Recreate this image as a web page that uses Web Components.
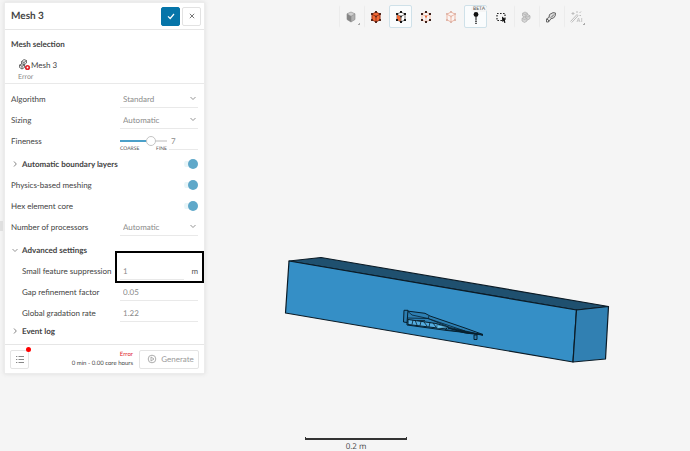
<!DOCTYPE html>
<html lang="en">
<head>
<meta charset="utf-8">
<title>Mesh 3</title>
<style>
html,body{height:100%}
body{margin:0;background:#f5f5f5;color:#444;font:8px/12px Lato,"Open Sans",sans-serif;text-rendering:geometricPrecision}
</style>
</head>
<body>
<mesh-workbench></mesh-workbench>
<script>
function define(name, html, setup) {
  const tpl = document.createElement('template');
  tpl.innerHTML = '<style>*,::before,::after{box-sizing:border-box}button,input,select{font:inherit;color:inherit;margin:0;text-rendering:inherit}</style>' + html;
  customElements.define(name, class extends HTMLElement {
    constructor() {
      super();
      this.attachShadow({mode: 'open'}).append(tpl.content.cloneNode(true));
    }
    connectedCallback() { if (setup) setup(this, this.shadowRoot); }
  });
}

const cube = (line, fill, dots, faces) => `
  <g stroke-linejoin="round" stroke="${line}" stroke-width="1">
  <path d="M8 3 12 5.200V10.800L8 13 4 10.800V5.200Z" fill="${fill}"/>${faces || ''}
  <path d="M4 5.200 8 7.500 12 5.200M8 7.500V13" fill="none"/></g>
  ${dots ? `<g fill="${dots}"><rect x="7" y="2" width="2" height="2"/><rect x="3" y="4" width="2" height="2"/><rect x="11" y="4" width="2" height="2"/><rect x="3" y="10" width="2" height="2"/><rect x="11" y="10" width="2" height="2"/><rect x="7" y="12" width="2" height="2"/><rect x="7.200" y="6.700" width="1.600" height="1.600"/></g>` : ''}`;

const ICONS = {
  solid: `<path d="M8 3 12 4.800 8 7.300 4 4.800Z" fill="#cfcfcf"/><path d="M4 4.800 8 7.300V13L4 10.500Z" fill="#858585"/><path d="M8 7.300 12 4.800V10.500L8 13Z" fill="#b0b0b0"/><path d="M8 3 12 4.800V10.500L8 13 4 10.500V4.800ZM4 4.800 8 7.300 12 4.800M8 7.300V13" fill="none" stroke="#888" stroke-width=".6"/>`,
  volume: cube('#9c3315', '#f26a36', '#54281d'),
  face: cube('#777', '#fff', '#161616', '<path d="M4 5.200 8 7.500V13L4 10.800Z" fill="#f26a36" stroke="none"/>'),
  node: `<path d="M8 3 12 5.200V10.800L8 13 4 10.800V5.200ZM4 5.200 8 7.500 12 5.200M8 7.500V13" fill="none" stroke="#f3bda9" stroke-width="1"/><g fill="#3c211b"><rect x="7" y="2" width="2" height="2"/><rect x="3" y="4" width="2" height="2"/><rect x="11" y="4" width="2" height="2"/><rect x="3" y="10" width="2" height="2"/><rect x="11" y="10" width="2" height="2"/><rect x="7" y="12" width="2" height="2"/></g><rect x="7" y="6.500" width="2" height="2" fill="#e96a3d"/>`,
  ghost: cube('#efb6a3', '#faf4f2', '#dfb8ac'),
  probe: `<circle cx="8" cy="5.500" r="2.400" fill="#111"/><path d="M8 7V11" stroke="#333" stroke-width="1.200"/><path d="M8 11.500V15" stroke="#333" stroke-width="1.600" stroke-dasharray="1.500 .7"/>`,
  select: `<rect x="4" y="4.500" width="8" height="7" fill="none" stroke="#222" stroke-width="1.200" stroke-dasharray="1.600 1.400"/><path d="M9 7.500 13 10.500 11.500 11 12.600 13.500 11.300 14 10.400 11.700 9.200 13Z" fill="#111"/>`,
  blocks: `<g fill="#d5d5d5" stroke="#b3b3b3" stroke-width=".8"><path d="M7 3 9.500 4.300V7L7 8.300 4.500 7V4.300Z"/><path d="M9.800 5.500 12 6.800V9.500L9.800 11 7.500 9.500V6.800Z"/><path d="M6.500 8 9 9.300V12L6.500 13.500 4 12V9.300Z"/><path d="M4.500 4.300 7 5.600 9.500 4.300M7.500 6.800 9.800 8 12 6.800M4 9.300 6.500 10.500 9 9.300" fill="none"/></g>`,
  cut: `<path d="M6.500 5.500Q10.500 2.500 12.500 4 13 7 10.500 9L8 9.700 6 8Z" fill="#ddd" stroke="#666" stroke-width="1"/><path d="M6.500 8 3.500 10V13H5.500L8 9.700M3.500 10 5.500 11V13" fill="#eee" stroke="#666" stroke-width="1"/><path d="M8 8.500 11 5.500" stroke="#666" stroke-width="1"/>`,
  wand: `<path d="M2.500 12.500 9 5.500M3.700 13.500 10 6.800M9 5.500 10 6.800M5 3V6M3.500 4.500H6.500M9 2V4M11.500 4 13 2.500M11.500 6.500H13" fill="none" stroke="#bdbdbd" stroke-width="1"/><path d="M9 13 10.500 9 12 13M9.600 11.800H11.500M13.700 9V13" fill="none" stroke="#c3c3c3" stroke-width=".9"/>`,
  check: `<path d="M5 8.300 7.200 10.500 11 6" fill="none" stroke="#fff" stroke-width="1.200"/>`,
  close: `<path d="M5.800 5.800 10.200 10.200M10.200 5.800 5.800 10.200" stroke="#777" stroke-width="1"/>`,
  down: `<path d="M5.500 7 8 9.500 10.500 7" fill="none" stroke="#888" stroke-width=".9"/>`,
  right: `<path d="M7 5.500 9.300 8 7 10.500" fill="none" stroke="#777" stroke-width=".9"/>`,
  list: `<path d="M6.500 5.500H12M6.500 8.500H12M6.500 11.500H12" stroke="#888" stroke-width="1"/><path d="M4 5.500H5.300M4 8.500H5.300M4 11.500H5.300" stroke="#888" stroke-width="1"/>`,
  play: `<circle cx="8" cy="8" r="3.800" fill="none" stroke="#a4a4a4" stroke-width=".9"/><path d="M7 6 10 8 7 10Z" fill="none" stroke="#a4a4a4" stroke-width=".9"/>`,
  mesh: `<g fill="#eee" stroke="#555" stroke-width=".8"><path d="M4.500 4.500 7 2.500 9.500 3.500V6L7 8 4.500 7Z"/><path d="M2.500 8 5 6.800 7.500 8V10.500L5 12 2.500 10.500Z"/><path d="M4.500 4.500 7 5.500 9.500 3.500M7 5.500V8M2.500 8 5 9.200 7.500 8M5 9.200V12" fill="none"/></g><circle cx="10.500" cy="10.500" r="2.600" fill="#e0242b"/><circle cx="10.500" cy="10.500" r=".9" fill="#fff"/>`
};

define('ui-icon', `<style>:host{display:inline-flex;flex:none;width:16px;height:16px}svg{width:100%;height:100%}</style><svg viewBox="0 0 16 16" aria-hidden="true"></svg>`,
  (el, r) => { r.querySelector('svg').innerHTML = ICONS[el.getAttribute('name')]; });

define('tool-button', `<style>
:host{display:block;position:relative}
button{display:flex;align-items:center;justify-content:center;width:23px;height:23px;padding:0;border:1px solid transparent;border-radius:2px;background:none}
:host([active]) button{background:#fafcfd;border-color:#cfe1e9}
:host([rule]) button{border-left-color:#ececec}
:host([menu])::after{content:"";position:absolute;right:2px;bottom:3px;width:2px;height:2px;border:solid #aaa;border-width:0 1px 1px 0}
span{position:absolute;top:1px;left:7px;padding:0 2px;border-radius:3px;background:#f5f5f5;font-size:5px;line-height:6px;color:#555}
span:empty{display:none}
</style><button type="button"><ui-icon></ui-icon></button><span></span>`,
  (el, r) => {
    r.querySelector('button').setAttribute('aria-label', el.getAttribute('label'));
    const i = document.createElement('ui-icon');
    i.setAttribute('name', el.getAttribute('icon'));
    r.querySelector('button').replaceChildren(i);
    r.querySelector('span').textContent = el.getAttribute('badge') || '';
  });

define('view-toolbar', `<style>:host{display:flex;justify-content:center;gap:2px;padding:5px 0}</style>
<tool-button label="Solid view" icon="solid" rule menu></tool-button>
<tool-button label="Select volumes" icon="volume" rule></tool-button>
<tool-button label="Select faces" icon="face" active></tool-button>
<tool-button label="Select nodes" icon="node"></tool-button>
<tool-button label="Hide selection" icon="ghost"></tool-button>
<tool-button label="Probe" icon="probe" active badge="BETA"></tool-button>
<tool-button label="Box select" icon="select"></tool-button>
<tool-button label="Assembly" icon="blocks" rule></tool-button>
<tool-button label="Cutting plane" icon="cut" rule></tool-button>
<tool-button label="Assistant" icon="wand" rule menu></tool-button>`);

define('model-scene', `<style>:host{display:block;min-height:0}svg{display:block;width:100%;height:100%}</style>
<svg viewBox="210 33 480 404" role="img" aria-label="Flow domain">
<g stroke="#0b1b26" stroke-width="1.200" stroke-linejoin="round">
<path d="M289 261 321 257.500 608.500 306.500 576.500 310Z" fill="#1f506f"/>
<path d="M289 261 576.500 310 573 362 285.500 313Z" fill="#358fc6"/>
<path d="M576.500 310 608.500 306.500 605.500 359 573 362Z" fill="#3180b2"/>
</g>
<g stroke="#06202f" stroke-width="1" fill="#2d7fb2" stroke-linejoin="round">
<path d="M407 311 425 313.300 430 316 465 328 483 334.500 447 330.500 407 325Z"/>
<path d="M404 310.300H408L407 322.500 403.500 322Z"/>
<path d="M407 318 428 318.500 450 327.500 483 335 445 329.500M408 311.500 412 315 428 318.500 429 316M428 318.500 465 331" fill="none" stroke-width=".8"/>
<path d="M408 319.500 436 323.500 448 327 446 329 408 324.500Z" fill="#54ade0"/>
<path d="M413 320 412 324.500M415 320 417 325M421 321.500 420 325.500M424 322 427 326M430 322 429 327M433 323 436 327M417 320.500H425" fill="none" stroke-width=".8"/>
<path d="M437 324.500 449 327.500 437 328.500Z" fill="#6bc6f3" stroke-width=".5"/>
<path d="M448 328 483 335 465 333Z" fill="#06202f"/>
<path d="M474 335H477V339.500H474Z"/>
</g></svg>`);

define('scale-bar', `<style>
:host{display:flex;flex-direction:column;align-items:center;gap:3px}
i{width:102px;height:3px;border:solid #333;border-width:0 1px 1px;border-bottom-width:2px}
span{font:8px/8px "Open Sans",sans-serif;color:#444}
</style><i></i><span><slot></slot></span>`);

define('model-viewport', `<style>
:host{display:grid;grid-template-rows:auto 1fr auto;min-width:0;min-height:0}
view-toolbar{padding-left:26px}
scale-bar{padding-right:188px}
</style><view-toolbar></view-toolbar><model-scene></model-scene><scale-bar>0.2 m</scale-bar>`);

define('setting-row', `<style>
:host{display:grid;grid-template-columns:1fr 78px;align-items:center;height:21px;padding:0 6px;position:relative}
:host([nested]) label{padding-left:11px}
label{white-space:nowrap}
.field{display:flex;align-items:center;position:relative;height:19px;color:#8b8b8b}
input[type=text],select{flex:1;min-width:0;width:100%;height:19px;padding:1px 0 0 3px;border:0;border-bottom:1px solid #e9e9e9;border-radius:0;background:none;appearance:none;outline:0}
.field>ui-icon{position:absolute;right:-3px;top:1px;pointer-events:none}
.field>span{padding-left:7px;color:#555}
:host([highlight])::after{content:"";position:absolute;box-sizing:border-box;top:-9px;bottom:-2px;right:0;width:89px;border:2px solid #000;pointer-events:none}
</style><label for="f"></label><div class="field"></div>`,
  (el, r) => {
    r.querySelector('label').textContent = el.getAttribute('label');
    const v = el.getAttribute('value'), unit = el.getAttribute('unit');
    r.querySelector('.field').innerHTML = el.hasAttribute('choice')
      ? `<select id="f"><option>${v}</option></select><ui-icon name="down"></ui-icon>`
      : `<input id="f" type="text" value="${v}">` + (unit ? `<span>${unit}</span>` : '');
  });

define('toggle-row', `<style>
:host{display:flex;align-items:center;justify-content:space-between;height:21px;padding:0 6px}
div{display:flex;align-items:center}
button{display:flex;width:11px;padding:0;border:0;background:none}
button ui-icon{margin-left:-4px}
:host(:not([section])) button{display:none}
:host([section]) label{font-weight:700}
input{appearance:none;width:14px;height:10px;display:flex;align-items:center;justify-content:flex-end;background:linear-gradient(#e9f5f8,#e9f5f8) 0 50%/12px 6px no-repeat;border-radius:5px}
input::before{content:"";width:10px;height:10px;border-radius:50%;background:#5fa8c9}
</style><div><button type="button" aria-label="Expand"><ui-icon name="right"></ui-icon></button><label for="t"></label></div><input id="t" type="checkbox" checked>`,
  (el, r) => { r.querySelector('label').textContent = el.getAttribute('label'); });

define('fineness-row', `<style>
:host{display:grid;grid-template-columns:1fr 78px;align-items:center;height:21px;padding:0 6px}
.field{display:grid;grid-template-columns:47px 29px;justify-content:space-between;align-items:center}
.slider{position:relative}
input[type=range]{display:block;appearance:none;width:100%;height:10px;background:linear-gradient(90deg,#4ba0c9 65%,#ddd 65%) 0 50%/100% 2px no-repeat}
input[type=range]::-webkit-slider-thumb{appearance:none;width:10px;height:10px;border:1px solid #c4c4c4;border-radius:50%;background:#fff}
p{position:absolute;top:10px;left:0;right:0;display:flex;justify-content:space-between;margin:0;font-size:5px;line-height:6px;color:#555}
input[type=text]{width:100%;height:19px;padding:1px 0 0 2px;border:0;border-bottom:1px solid #e9e9e9;color:#8b8b8b;background:none}
</style><label for="s">Fineness</label><div class="field"><div class="slider"><input id="s" type="range" min="0" max="10" value="7"><p><span>COARSE</span><span>FINE</span></p></div><input type="text" aria-label="Fineness value" value="7"></div>`);

define('section-title', `<style>
:host{display:flex;height:21px;padding:0 6px}
button{display:flex;align-items:center;width:100%;padding:0;border:0;background:none;font-weight:700}
ui-icon{margin:0 -1px 0 -4px}
</style><button type="button"><ui-icon></ui-icon><slot></slot></button>`,
  (el, r) => {
    const i = document.createElement('ui-icon');
    i.setAttribute('name', el.getAttribute('icon'));
    r.querySelector('ui-icon').replaceWith(i);
  });

define('panel-header', `<style>
:host{display:flex;align-items:center;gap:2px;height:27px;padding:0 3px 0 6px;border-bottom:1px solid #e6e6e6}
h1{flex:1;margin:0;font-size:10px;line-height:14px;font-weight:700;color:#444}
button{display:flex;align-items:center;justify-content:center;width:19px;height:19px;padding:0;border:1px solid #e2e2e2;border-radius:2px;background:#fff}
button.ok{background:#0675a9;border-color:#0675a9}
</style><h1><slot></slot></h1><button type="button" class="ok" aria-label="Apply"><ui-icon name="check"></ui-icon></button><button type="button" aria-label="Close"><ui-icon name="close"></ui-icon></button>`);

define('mesh-selection', `<style>
:host{display:block;padding:8px 6px 1px;border-bottom:1px solid #e9e9e9}
h2{margin:0 0 8px;font-size:8px;line-height:12px;font-weight:700}
div{display:flex;align-items:center;padding-left:6px;height:13px}
ui-icon{margin-right:-2px}
small{display:block;padding:1px 0 0 7px;font-size:7px;line-height:10px;color:#888}
</style><h2>Mesh selection</h2><div><ui-icon name="mesh"></ui-icon><span>Mesh 3</span></div><small>Error</small>`);

define('panel-footer', `<style>
:host{display:flex;align-items:center;gap:6px;height:29px;padding:0 5px;border-top:1px solid #e6e6e6}
button{display:flex;align-items:center;justify-content:center;height:19px;padding:0;border:1px solid #e4e4e4;border-radius:2px;background:#fff;color:#9b9b9b}
.log{position:relative;width:19px}
.log::after{content:"";position:absolute;right:-3px;top:-4px;width:5px;height:5px;border-radius:50%;background:#f00}
.run{width:60px;gap:1px}
p{flex:1;margin:0;text-align:right;font-size:6px;line-height:9px}
p b{display:block;font-weight:400;color:#e0242b}
</style><button type="button" class="log" aria-label="Event log"><ui-icon name="list"></ui-icon></button><p><b>Error</b>0 min - 0.00 core hours</p><button type="button" class="run" disabled><ui-icon name="play"></ui-icon>Generate</button>`);

define('settings-panel', `<style>
:host{display:block;box-sizing:border-box;align-self:start;background:#fff;border:1px solid #ececec;box-shadow:0 0 4px #ddd}
.group{padding-top:4px}
.group+.group{padding-top:2px}
section-title.last{height:16px}
.end{padding-bottom:5px}
</style>
<panel-header>Mesh 3</panel-header>
<mesh-selection></mesh-selection>
<div class="group">
<setting-row label="Algorithm" value="Standard" choice></setting-row>
<setting-row label="Sizing" value="Automatic" choice></setting-row>
<fineness-row></fineness-row>
</div><div class="group">
<toggle-row label="Automatic boundary layers" section></toggle-row>
<toggle-row label="Physics-based meshing"></toggle-row>
<toggle-row label="Hex element core"></toggle-row>
<setting-row label="Number of processors" value="Automatic" choice></setting-row>
</div><div class="group end">
<section-title icon="down">Advanced settings</section-title>
<setting-row nested highlight label="Small feature suppression" value="1" unit="m"></setting-row>
<setting-row nested label="Gap refinement factor" value="0.05"></setting-row>
<setting-row nested label="Global gradation rate" value="1.22"></setting-row>
<section-title class="last" icon="right">Event log</section-title>
</div>
<panel-footer></panel-footer>`);

define('mesh-workbench', `<style>
:host{display:grid;grid-template-columns:4px 201px 1fr;min-height:100vh;background:#f5f5f5}
i{align-self:center;height:10px;width:3px;background:#e0e0e0}
settings-panel{margin-top:2px}
model-viewport{margin-left:5px}
</style><i></i><settings-panel></settings-panel><model-viewport></model-viewport>`);
</script>
</body>
</html>
